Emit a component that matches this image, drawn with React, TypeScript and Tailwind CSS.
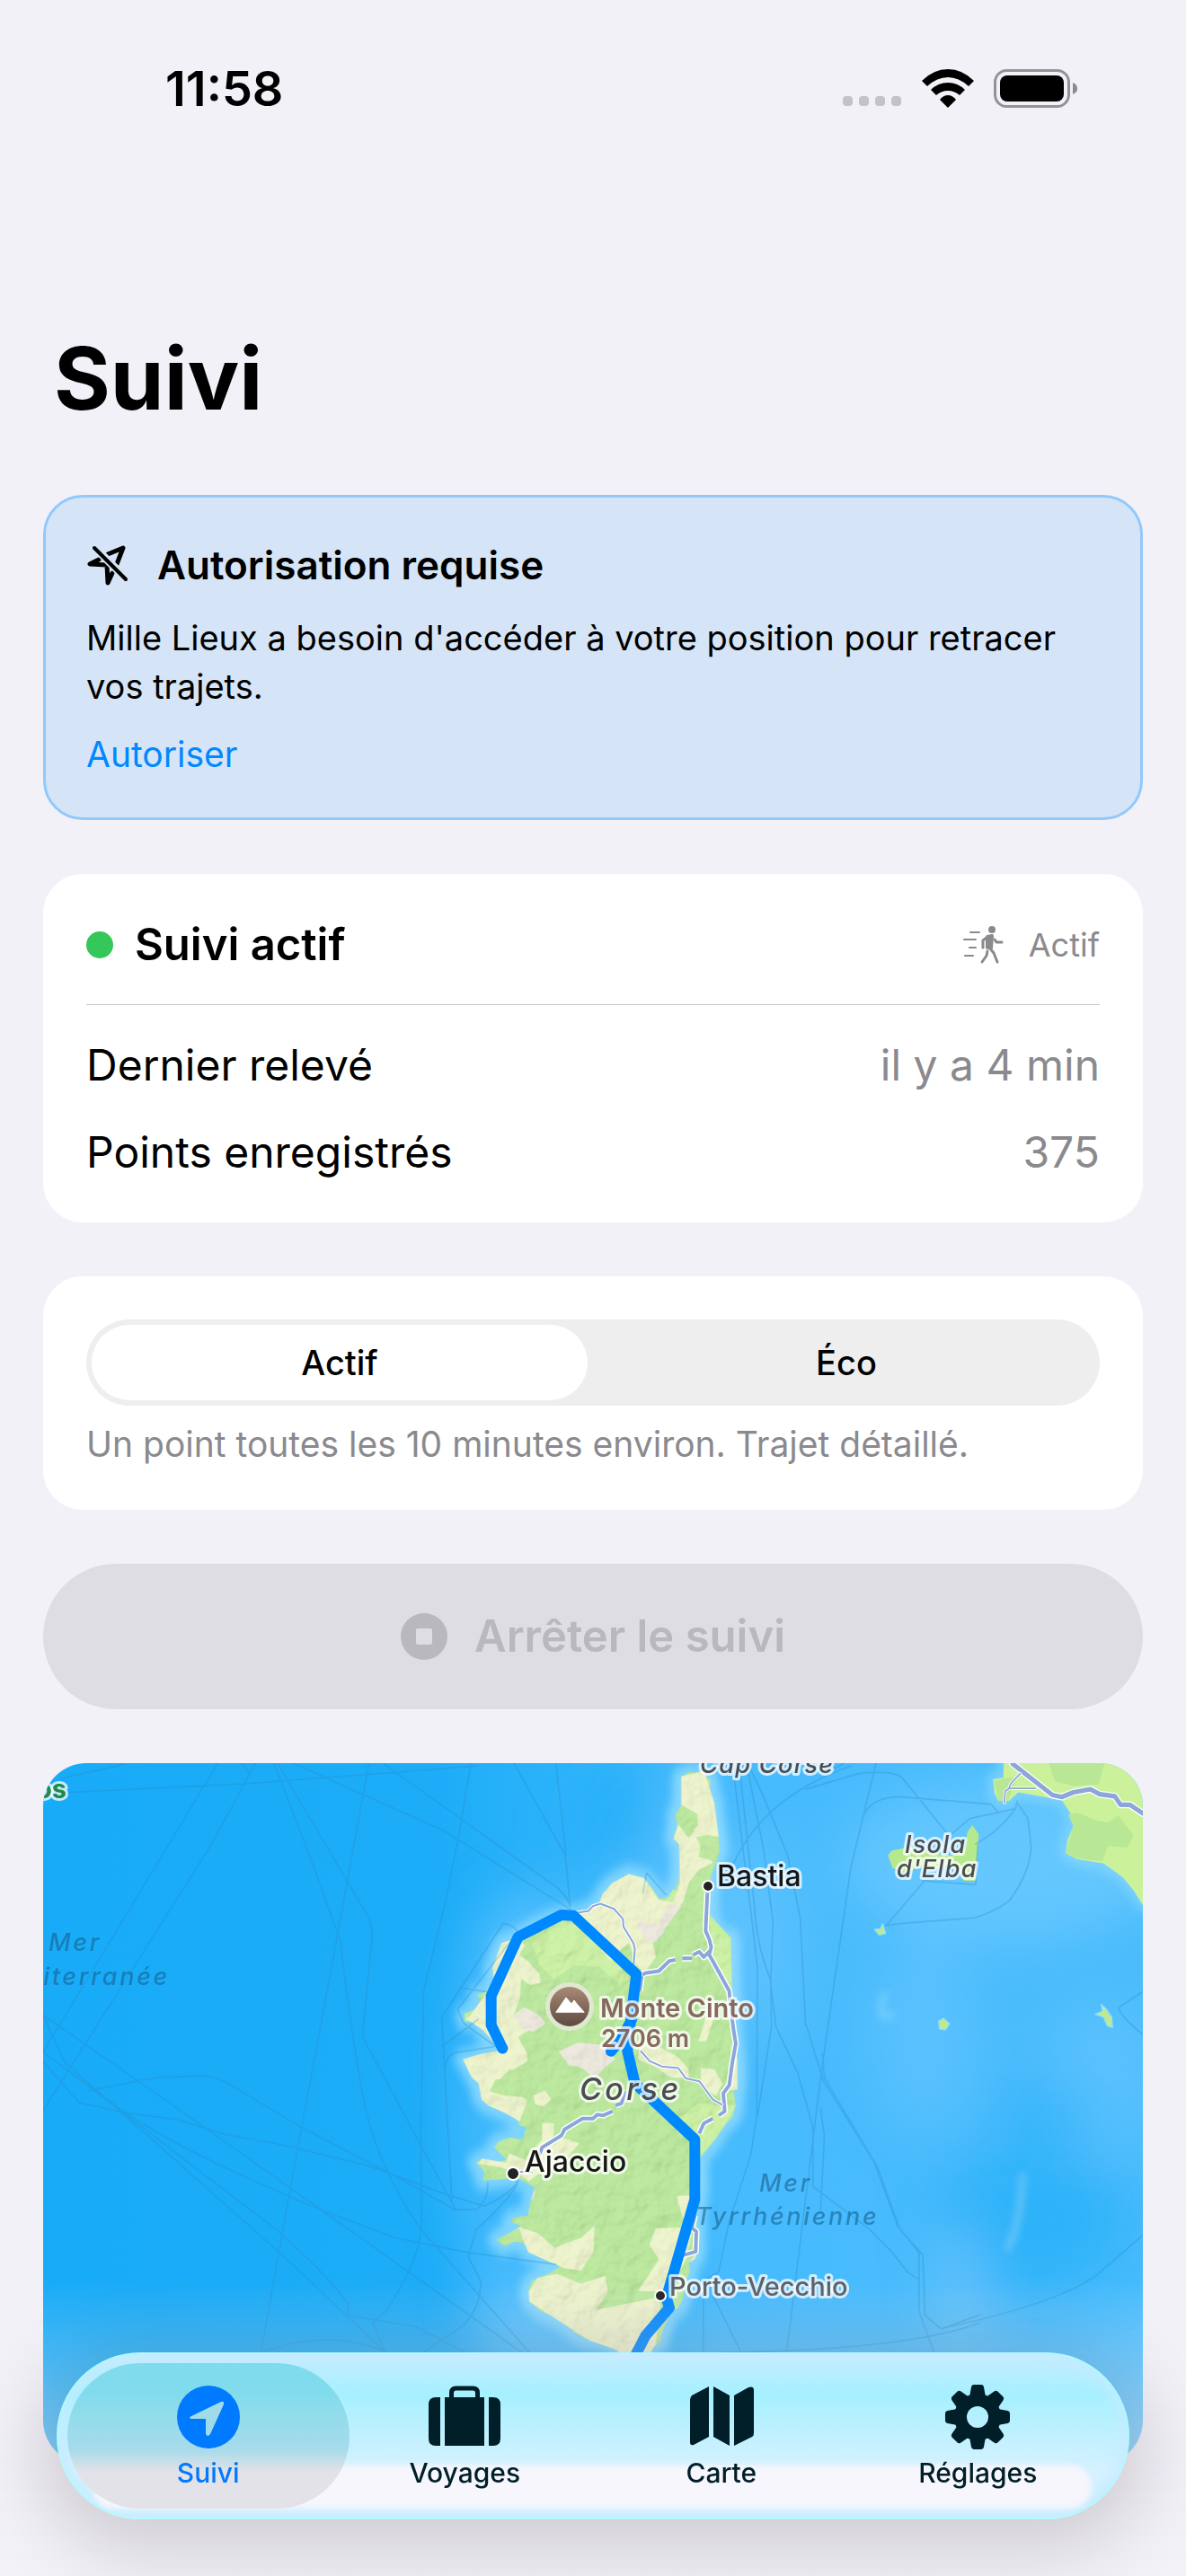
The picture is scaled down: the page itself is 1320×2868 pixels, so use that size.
import { useState } from "react";
import type { ReactNode } from "react";

const COAST =
  "M775 85L800 74L850 76L872 95L870 120L885 150L888 190L900 240L903 270L888 305L875 330L870 370L870 430L885 465L912 485L940 487L943 600L948 650L950 730L962 790L962 865L950 868L956 905L945 935L915 958L888 965L892 985L860 1015L838 1035L836 1060L838 1120L825 1180L828 1220L825 1285L800 1297L803 1320L790 1345L780 1385L765 1410L740 1420L712 1468L705 1495L670 1515L640 1560L600 1560L560 1515L520 1495L470 1492L415 1470L385 1445L340 1430L300 1415L268 1390L265 1365L275 1345L295 1335L330 1325L360 1312L380 1300L330 1285L265 1272L250 1248L215 1245L185 1257L158 1240L205 1222L238 1205L205 1195L215 1185L262 1180L272 1145L285 1110L262 1100L225 1085L165 1090L112 1092L118 1070L90 1048L110 1038L160 1048L190 1040L150 1010L165 995L205 985L245 990L258 960L235 955L222 930L190 925L130 905L108 890L98 850L80 835L75 815L45 790L100 778L185 765L150 745L115 722L125 705L95 700L72 690L52 695L52 675L90 665L105 640L92 630L120 622L150 600L145 560L160 540L178 500L225 488L300 455L375 430L420 430L460 420L500 402L512 380L545 350L600 328L650 340L680 365L700 390L740 385L765 350L772 300L768 255L748 240L762 205L755 180L775 155Z";

const MAINLAND =
  "M2655 40L2653 90L2626 95L2630 130L2640 150L2668 150L2693 128L2748 138L2808 148L2833 185L2838 215L2823 250L2818 285L2848 300L2918 310L2968 345L2998 380L3022 418L3030 40Z";

const PALE_LAND = [
  "M775 85L850 70L885 150L900 235L865 232L850 262L880 300L832 318L800 350L780 400L730 440L715 475L680 500L690 535L650 578L622 550L600 500L570 520L540 545L508 520L510 490L470 460L430 430L500 402L512 378L545 350L600 328L650 338L700 392L748 398L770 350L768 255L750 240L765 205L800 238L830 205L828 178L775 155Z",
  "M225 488L252 505L235 530L262 545L300 575L305 600L270 605L240 590L235 640L215 680L270 715L230 735L260 775L225 790L170 768L120 722L60 690L110 640L150 600L145 560L175 500Z",
  "M45 790L100 778L175 768L215 780L260 775L262 795L215 815L210 840L155 840L135 870L180 880L250 885L260 895L235 945L190 925L130 905L108 890L98 850L75 835Z",
  "M280 880L320 868L340 890L315 908L288 902Z",
  "M310 948L350 950L348 985L400 990L435 1000L400 1030L380 1060L300 1075L265 1095L240 1080L175 1060L95 1050L110 1038L190 1048L200 1025L250 1040L310 990Z",
  "M232 1208L300 1225L350 1260L440 1235L485 1205L482 1270L440 1318L380 1310L265 1272L250 1248Z",
  "M265 1370L295 1335L360 1325L440 1350L520 1330L530 1370L490 1415L590 1400L690 1385L705 1400L690 1500L640 1560L600 1560L560 1515L470 1492L340 1430L268 1395Z",
  "M690 1212L815 1208L790 1290L730 1370L630 1368L700 1290L668 1252Z",
  "M758 1130L828 1130L818 1185L780 1185Z",
  "M640 740L690 755L760 782L800 815L798 838L740 835L690 810L630 790Z",
  "M840 812L885 815L912 850L892 882L840 855Z",
  "M868 640L892 645L878 700L858 745L832 745L850 700Z",
  "M940 750L962 790L962 865L942 868Z",
];

const BRIGHT_LAND = [
  "M870 430L940 487L945 640L905 575L878 530Z",
  "M770 935L830 900L905 905L956 905L920 955L892 985L838 1035L832 985Z",
  "M175 500L160 545L190 540L200 510ZM52 675L85 690L72 697L52 695Z",
  "M780 372L745 368L722 398L760 402Z",
  "M275 500L380 445L455 460L510 520L560 545L600 590L570 605L500 560L420 555L350 590L300 555Z",
];

const ROCK = [
  "M215 680L250 660L300 680L322 700L280 722L240 710Z",
  "M365 770L430 748L520 755L555 790L520 810L485 838L440 810L400 805Z",
  "M625 445L700 455L730 405L775 408L735 450L690 498L655 490Z",
  "M800 1297L828 1270L818 1290ZM272 1145L285 1112L286 1128Z",
];

const ROADS = [
  "M862 375L856 470L868 490L875 510L868 530L880 545L935 620L940 660L950 720L957 750L945 800L935 855L915 875L920 920L900 930",
  "M880 938L850 950L835 975",
  "M870 520L850 535L835 522L815 530",
  "M810 538L778 538",
  "M755 542L735 545L700 570L655 575L643 580L636 620",
  "M545 920L515 930L495 928L480 938L445 938L385 965L375 980L310 1010L300 1030",
  "M555 905L575 900L590 870",
  "M820 1180L810 1210L825 1220L823 1270L775 1280",
];

const MINOR_ROADS = [
  "M425 425L465 420L480 408L505 402L550 415L580 440L582 460L615 500L620 515L615 560L640 580",
  "M640 770L670 795L710 808L765 812L790 838L835 845L880 890L910 903",
  "M225 1073L245 1070L275 1072",
];

const ROUTE =
  "M178 763L140 705L140 632L230 485L375 430L415 432L625 578L608 680L595 770L620 850L820 990L820 1140L725 1385L735 1410L655 1480L600 1560M540 770L575 740L610 690";

const FERRIES =
  "M575 55L114 795M675 55L560 260L114 945M640 55L662 80M975 55L880 560L780 1080L690 1566M725 55L830 320L900 510Q925 720 958 900T1113 1250L1400 1566M735 55L975 450Q988 480 982 520L958 755L1205 1200M1245 55L1215 230L1180 400L1120 640L1113 1000L1115 1240Q1110 1330 1020 1460L985 1490L1020 1566M1015 55L1470 370Q1500 395 1508 420M780 55L1170 225L1508 428M1360 55L1495 290L1508 420M1470 55L1497 290M180 128L660 105L1000 80L1260 60M165 92L330 55M114 820L210 925L330 950L470 968L590 1005L730 1030L970 1085L1180 1160L1280 1190Q1350 1160 1370 1125M114 700L500 960L850 1200L1380 1566M114 795L330 950Q500 1060 850 1200L1040 1270L1240 1310L1470 1340M235 893L415 860L550 855Q580 860 620 885L800 990L1030 1105L1205 1200L1260 1198Q1290 1180 1290 1130M114 700L170 820L740 1310L1020 1566M190 850L730 1250Q860 1360 920 1440L920 1470L1100 1500L1230 1566M690 1566Q880 1500 1020 1566M1330 465L1168 705L1195 1180M1330 465Q1350 465 1370 485L1210 685L1225 720L1310 780L1210 795Q1180 800 1178 830M1215 630L1290 640M1170 780L1265 710M1370 1130Q1350 1170 1260 1250L1238 1320L1270 1380Q1275 1450 1220 1500L1120 1566M1938 60L1968 300L1985 430L2003 580L2001 960L1985 1060L1928 1230L1900 1360L1860 1380L1860 1566M1955 60L1995 420Q2000 520 2038 610L2040 730L2003 960M1975 60L2020 280L2044 460L2038 620M1980 60L2015 130L2083 290L2116 450L2130 720L2178 870L2313 1080L2373 1240L2430 1310L2430 1460L2470 1566M2316 55L2250 320L2170 860L2080 1566M2175 800L2180 860L2320 1090L2380 1250L2440 1315L2446 1470L2488 1505L2590 1470M2038 620L2052 730L2110 850L2150 990L2150 1140L2300 1250L2360 1310L2400 1360L2428 1378M2170 940L2180 1010L2170 1200M1940 310Q2020 140 2250 60M2130 120L2270 80Q2360 70 2385 90L2510 240L2565 195L2685 170L2690 150M2288 180Q2310 140 2380 140L2620 158L2640 180M2580 260Q2640 230 2685 170M2690 155L2718 195L2727 270Q2720 340 2670 405Q2640 430 2580 450L2380 465L2343 470L2445 355M2440 355L2580 365L2585 260M1885 1420L1960 1566M2488 1505Q2840 1430 2920 1350L3022 1265M1900 1566Q2400 1560 2590 1490M3022 640L2958 680Q2960 700 3022 750M2230 55L2190 75M1700 385L1710 335L1760 390";

const MAP_LABEL = "font-medium [paint-order:stroke] stroke-white/75 stroke-[6px]";

function CorsicaMap() {
  return (
    <svg
      viewBox="0 0 1224 780"
      preserveAspectRatio="xMidYMid slice"
      className="block h-[780px] w-full"
      role="img"
      aria-label="Trajet en Corse"
      strokeLinejoin="round"
      strokeLinecap="round"
    >
      <defs>
        <linearGradient id="sea" x1="0" x2="1">
          <stop offset="0" stopColor="#18abf7" />
          <stop offset="0.36" stopColor="#1dadf8" />
          <stop offset="0.62" stopColor="#46bbfd" />
          <stop offset="1" stopColor="#4abcfc" />
        </linearGradient>
        <linearGradient id="peak" x1="0" y1="0" x2="0" y2="1">
          <stop offset="0" stopColor="#a98a76" />
          <stop offset="1" stopColor="#5f4a40" />
        </linearGradient>
        <filter id="haze" filterUnits="userSpaceOnUse" x="-200" y="-200" width="1700" height="1200">
          <feGaussianBlur stdDeviation="30" />
        </filter>
        <filter id="shore" filterUnits="userSpaceOnUse" x="-200" y="-200" width="3600" height="2200">
          <feGaussianBlur stdDeviation="14" />
        </filter>
        <filter id="streak" filterUnits="userSpaceOnUse" x="0" y="0" width="1224" height="780">
          <feGaussianBlur stdDeviation="4" />
        </filter>
        <filter id="relief" x="0" y="0" width="100%" height="100%">
          <feTurbulence type="fractalNoise" baseFrequency="0.045" numOctaves="3" seed="8" />
          <feDiffuseLighting surfaceScale="7" lightingColor="#fff">
            <feDistantLight azimuth="225" elevation="55" />
          </feDiffuseLighting>
        </filter>
        <clipPath id="island">
          <path d={COAST} transform="translate(452 -23) scale(.3333 .4464)" />
        </clipPath>
      </defs>

      <rect width="1224" height="780" fill="url(#sea)" />

      {/* shallow and deep water */}
      <g filter="url(#haze)">
        <ellipse cx="545" cy="215" rx="60" ry="70" fill="#6cc8ff" opacity=".7" />
        <ellipse cx="700" cy="170" rx="70" ry="150" fill="#6cc8ff" opacity=".5" />
        <ellipse cx="640" cy="60" rx="50" ry="60" fill="#22aff8" opacity=".8" />
        <ellipse cx="1070" cy="110" rx="180" ry="90" fill="#76ceff" opacity=".6" />
        <ellipse cx="980" cy="300" rx="60" ry="110" fill="#6cc8ff" opacity=".5" />
        <ellipse cx="1180" cy="350" rx="60" ry="90" fill="#6cc8ff" opacity=".5" />
        <ellipse cx="800" cy="200" rx="50" ry="120" fill="#6cc8ff" opacity=".5" />
        <ellipse cx="1120" cy="390" rx="60" ry="30" fill="#22aff8" opacity=".6" />
        <ellipse cx="1100" cy="510" rx="110" ry="80" fill="#22aff8" opacity=".7" />
        <ellipse cx="500" cy="400" rx="40" ry="200" fill="#5cc2ff" opacity=".6" />
        <ellipse cx="560" cy="620" rx="80" ry="60" fill="#6cc8ff" opacity=".7" />
        <ellipse cx="1020" cy="590" rx="18" ry="80" fill="#7ccbfa" opacity=".8" />
      </g>
      <g filter="url(#streak)" fill="none">
        <path d="M1090 460Q1088 510 1074 540" stroke="#8ed0f7" strokeWidth="7" opacity=".6" />
        <path d="M936 258Q925 290 945 280" stroke="#8edcff" strokeWidth="8" opacity=".5" />
      </g>

      {/* Corsica */}
      <g transform="translate(452 -23) scale(.3333 .4464)">
        <path d={COAST} fill="none" stroke="#9fe2ff" strokeWidth="20" vectorEffect="non-scaling-stroke" opacity=".7" filter="url(#shore)" />
        <path d={COAST} fill="#b3e692" />
        {BRIGHT_LAND.map((d) => <path key={d} d={d} fill="#c6f09a" />)}
        {PALE_LAND.map((d) => <path key={d} d={d} fill="#ecf3c6" />)}
        {ROCK.map((d) => <path key={d} d={d} fill="#ece6da" />)}
        <path d="M825 235L862 230L898 240L902 268L880 295L832 285L840 262ZM290 620L330 600L380 615L360 640ZM170 840L200 815L250 822L215 845Z" fill="#b9e795" />
      </g>

      {/* mainland, Elba and the small islands */}
      <g transform="translate(-48 -23) scale(.4209 .4337)">
        <path d={MAINLAND} fill="none" stroke="#9fe2ff" strokeWidth="30" opacity=".5" filter="url(#shore)" />
        <path d={MAINLAND} fill="#cbf29b" />
        <path d="M2825 185L2850 180L2898 200L2930 205L2958 188L2998 240L2980 270L2930 265L2915 305L2848 298L2818 285L2838 215ZM2768 40L2920 55L2905 108L2840 112L2790 100ZM2652 92L2690 88L2665 150L2640 150L2628 100Z" fill="#b8e795" />
        <path d="M2348 290L2358 278L2398 270L2438 275L2468 285L2518 290L2553 270L2558 230L2571 212L2588 235L2586 270L2583 300L2580 355L2548 355L2538 330L2498 315L2458 330L2428 320L2398 335L2360 322Z" fill="#b6e98c" />
        <path d="M2312 480L2328 478L2334 465L2342 490L2325 495ZM2482 715L2495 708L2511 722L2500 738L2484 735ZM2896 698L2915 690L2912 672L2925 684L2940 705L2942 732L2928 728L2918 705Z" fill="#bdea8e" stroke="#8edcff" strokeWidth="3" />
        <path d={FERRIES} fill="none" stroke="#2c8ac4" strokeWidth="4" opacity=".32" />
        <g fill="none">
          <path d="M2678 55L2783 135L2808 140L2838 128L2883 120L2908 133L2948 138L2963 160L2988 160L3022 182" stroke="#fff" strokeWidth="18" />
          <path d="M2678 55L2783 135L2808 140L2838 128L2883 120L2908 133L2948 138L2963 160L2988 160L3022 182" stroke="#8ba6d8" strokeWidth="12" />
          <path d="M2698 80L2673 105L2668 118L2738 118M2668 118L2658 125L2656 154" stroke="#fff" strokeWidth="8" />
          <path d="M2698 80L2673 105L2668 118L2738 118M2668 118L2658 125L2656 154" stroke="#8ba6d8" strokeWidth="4" />
        </g>
      </g>

      <g clipPath="url(#island)">
        <rect x="450" width="350" height="780" filter="url(#relief)" className="mix-blend-multiply" opacity=".14" />
      </g>

      <g transform="translate(452 -23) scale(.3333 .4464)" fill="none">
        <path d={ROADS.join("")} stroke="#fff" strokeWidth="7" vectorEffect="non-scaling-stroke" strokeLinecap="butt" />
        <path d={ROADS.join("")} stroke="#8ba6d8" strokeWidth="4" vectorEffect="non-scaling-stroke" strokeLinecap="butt" />
        <path d={MINOR_ROADS.join("")} stroke="#fff" strokeWidth="4" vectorEffect="non-scaling-stroke" />
        <path d={MINOR_ROADS.join("")} stroke="#8ba6d8" strokeWidth="2" vectorEffect="non-scaling-stroke" />
        <path d={ROUTE} stroke="#0088ff" strokeWidth="12" vectorEffect="non-scaling-stroke" />
      </g>

      {/* summit badge */}
      <circle cx="586" cy="271" r="27" fill="#dfe9cf" />
      <circle cx="586" cy="271" r="22" fill="url(#peak)" />
      <path d="M571 277L582 261L588 268L591 264L594 268L602 277Z" fill="#fff" stroke="#fff" strokeWidth="1" />

      <g className="fill-[#222] stroke-white stroke-2">
        <circle cx="740" cy="137" r="6" />
        <circle cx="523" cy="457" r="7" />
        <circle cx="687" cy="593" r="6" />
      </g>

      <g fontSize="29" className={MAP_LABEL}>
        <text x="750" y="137" fontSize="32" fill="#161616">Bastia</text>
        <text x="536" y="455" fontSize="32" fill="#161616">Ajaccio</text>
        <text x="697" y="593" fill="#5c6068">Porto-Vecchio</text>
        <text x="620" y="283" fontWeight="600" fill="#86695c">Monte Cinto</text>
        <text x="621" y="316" fontSize="27" fontWeight="600" fill="#86695c">2706 m</text>
        <text x="-8" y="39" fontWeight="700" fill="#1f8a4a">os</text>
        <g fontStyle="italic" fill="#4a4d50">
          <text x="597" y="375" fontSize="34" className="tracking-widest">Corse</text>
          <text x="959" y="100" fontSize="27" className="tracking-wider">Isola</text>
          <text x="950" y="127" fontSize="27" className="tracking-wider">d'Elba</text>
          <text x="731" y="11" fontSize="27" className="tracking-wider">Cap Corse</text>
        </g>
      </g>
      <g fontSize="27" fontStyle="italic" className="fill-[#17608f]/60 font-medium tracking-widest">
        <text x="6" y="209">Mer</text>
        <text x="141" y="247" textAnchor="end">Méditerranée</text>
        <text x="797" y="477">Mer</text>
        <text x="726" y="514">Tyrrhénienne</text>
      </g>
    </svg>
  );
}

function StatusBar() {
  return (
    <header className="flex h-[129px] items-end justify-between pr-[120px] pl-[184px]">
      <time className="text-[54px] leading-[60px] font-semibold">11:58</time>
      <div className="flex items-center pb-[9px]">
        <div className="flex gap-[7px] self-end pb-[2px]">
          <i className="size-[11px] rounded-[4px] bg-[#c3c2c8]" />
          <i className="size-[11px] rounded-[4px] bg-[#c3c2c8]" />
          <i className="size-[11px] rounded-[4px] bg-[#c3c2c8]" />
          <i className="size-[11px] rounded-[4px] bg-[#c3c2c8]" />
        </div>
        <svg viewBox="0 0 58 43" className="ml-[23px] h-[43px] w-[58px]">
          <path d="M0 13Q13 0 29 0T58 13L52 19Q41 9 29 9T6 19Z" />
          <path d="M10 23Q18 15 29 15T48 23L42 29Q36 24 29 24T16 29Z" />
          <path d="M20 34Q24 29 29 29T38 34L29 43Z" />
        </svg>
        <svg viewBox="0 0 94 43" className="ml-[22px] h-[43px] w-[94px]">
          <rect x="1.5" y="1.5" width="82" height="40" rx="13" fill="none" stroke="#929297" strokeWidth="3" />
          <rect x="7" y="7" width="71" height="29" rx="8" />
          <path d="M88 15Q93 17 93 21.500T88 28Z" fill="#8a8a8e" />
        </svg>
      </div>
    </header>
  );
}

function LocationSlashIcon() {
  return (
    <svg viewBox="0 0 48 48" className="size-12" fill="none" stroke="currentColor" strokeWidth="5" strokeLinecap="round" strokeLinejoin="round">
      <path d="M24 12L41 5L34 23M14 18L4 23L23 24L24 44L29 33" />
      <path d="M10 5L45 40" stroke="#d5e5f7" strokeWidth="9" />
      <path d="M9 5L44 40" strokeWidth="4" />
    </svg>
  );
}

function WalkIcon() {
  return (
    <svg viewBox="0 0 46 44" className="h-[44px] w-[46px]" fill="none" stroke="currentColor" strokeWidth="3" strokeLinecap="round" strokeLinejoin="round">
      <circle cx="33" cy="5" r="4" fill="currentColor" stroke="none" />
      <path d="M9 8H19M2 16H15M8 25H15M3 34H12" strokeWidth="2" />
      <path d="M28 13L33 12L32 25L28 25Z" fill="currentColor" strokeWidth="4" />
      <path d="M27 14L23 17V25M36 16L38 19H44M31 26L35 31L39 41M28 29L27 34L22 41" />
    </svg>
  );
}

function TabItem({ label, selected, children }: { label: string; selected?: boolean; children: ReactNode }) {
  return (
    <a
      href="#"
      aria-current={selected ? "page" : undefined}
      className={`relative flex flex-1 flex-col items-center gap-2 pt-6 ${selected ? "text-[#007aff]" : "text-[#011f28]"}`}
    >
      {selected && (
        <span className="absolute -inset-x-[14px] inset-y-0 rounded-full bg-linear-to-b from-[#80dcec] from-20% via-[#a8dbea] via-60% to-[#e3e2e8] to-75%" />
      )}
      <svg viewBox="0 0 80 72" className="relative h-[72px] w-20" fill="currentColor">
        {children}
      </svg>
      <span className="relative text-[30px] leading-9 font-medium">{label}</span>
    </a>
  );
}

function TabBar() {
  return (
    <nav className="fixed inset-x-[63px] bottom-[63px] h-[186px] overflow-clip rounded-full border-2 border-[#b0f8ff] bg-linear-to-b from-[#c4ecff] via-[#a6f0ff] via-25% to-[#d4f1ff] to-70% px-6 py-[10px] shadow-[0_16px_80px_16px_rgba(30,20,30,0.17)]">
      <span className="absolute inset-0 rounded-full shadow-[inset_0_0_16px_4px_#c6ebff]" />
      <span className="absolute inset-x-10 top-[123px] bottom-[10px] rounded-r-[40px] rounded-l-[30px] bg-[#f6f6fc] blur-[3px]" />
      <div className="flex h-full">
        <TabItem label="Suivi" selected>
          <circle cx="40" cy="36" r="35" />
          <path d="M21 35L54 19Q58 18 57 22L42 55Q39 59 37 55V38H21Q17 37 21 35Z" fill="#a0dbea" />
        </TabItem>
        <TabItem label="Voyages">
          <path d="M13 14V68H8Q0 68 0 60V22Q0 14 8 14ZM18 14H62V68H18ZM67 14H72Q80 14 80 22V60Q80 68 72 68H67Z" />
          <path d="M25.500 15V9Q25.500 4 30.500 4H49.500Q54.500 4 54.500 9V15" fill="none" stroke="currentColor" strokeWidth="5" />
        </TabItem>
        <TabItem label="Carte">
          <path d="M26 2V58L9 67Q5 68 5 64V17Q5 14 7 12ZM31 2L49 12V68L31 58ZM54 12L70 3Q76 1 76 6V54Q76 57 74 58L54 68Z" />
        </TabItem>
        <TabItem label="Réglages">
          <g stroke="currentColor" strokeWidth="6" strokeLinejoin="round">
            {[0, 45, 90, 135, 180, 225, 270, 315].map((angle) => (
              <path key={angle} d="M36 3H44L46 14H34Z" transform={`rotate(${angle} 40 36)`} />
            ))}
          </g>
          <circle cx="40" cy="36" r="19" fill="none" stroke="currentColor" strokeWidth="14" />
        </TabItem>
      </div>
    </nav>
  );
}

const MODES = [
  { id: "actif", label: "Actif" },
  { id: "eco", label: "Éco" },
];

export default function App() {
  const [mode, setMode] = useState("actif");

  return (
    <div className="min-h-screen bg-[#f2f1f7] pb-[125px] font-['Inter','Liberation_Sans',sans-serif] text-black">
      <StatusBar />

      <main className="flex flex-col gap-[60px] px-12 pt-[232px]">
        <h1 className="mb-[10px] px-3 text-[96px] leading-[120px] font-bold">Suivi</h1>

        {/* Permission notice */}
        <section className="flex flex-col gap-[22px] rounded-[44px] border-3 border-[#93c8fb] bg-[#d5e5f7] px-[45px] pt-[43px] pb-[43px]">
          <h2 className="flex items-center gap-[31px] text-[44px] leading-[64px] font-semibold">
            <LocationSlashIcon />
            Autorisation requise
          </h2>
          <p className="text-[38px] leading-[54px]">
            Mille Lieux a besoin d'accéder à votre position pour retracer vos trajets.
          </p>
          <button className="self-start text-[39px] leading-[54px] text-[#0088ff]">Autoriser</button>
        </section>

        {/* Tracking status */}
        <section className="flex flex-col gap-9 rounded-[44px] bg-white p-12">
          <div className="flex items-center">
            <span className="size-[30px] rounded-full bg-[#34c759]" />
            <h2 className="ml-6 text-[49px] leading-[61px] font-semibold">Suivi actif</h2>
            <span className="ml-auto flex items-center gap-7 text-[36px] text-[#8a8a8e]">
              <WalkIcon />
              Actif
            </span>
          </div>
          <hr className="border-t border-[#c6c6c8]" />
          <dl className="flex flex-col gap-9 text-[48px] leading-[61px]">
            <div className="flex justify-between">
              <dt>Dernier relevé</dt>
              <dd className="text-[#8a8a8e]">il y a 4 min</dd>
            </div>
            <div className="flex justify-between">
              <dt>Points enregistrés</dt>
              <dd className="text-[#8a8a8e]">375</dd>
            </div>
          </dl>
        </section>

        {/* Tracking mode */}
        <section className="flex flex-col gap-[18px] rounded-[44px] bg-white p-12">
          <div role="radiogroup" aria-label="Mode de suivi" className="flex h-24 gap-3 rounded-full bg-[#eeeeee] p-[6px]">
            {MODES.map(({ id, label }) => (
              <label
                key={id}
                className="relative flex flex-1 items-center justify-center rounded-full text-[38px] font-medium has-checked:bg-white"
              >
                <input
                  type="radio"
                  name="mode"
                  value={id}
                  checked={mode === id}
                  onChange={() => setMode(id)}
                  className="sr-only"
                />
                {label}
              </label>
            ))}
          </div>
          <p className="text-[39px] leading-[50px] text-[#8a8a8e]">
            Un point toutes les 10 minutes environ. Trajet détaillé.
          </p>
        </section>

        <button
          disabled
          className="flex h-[162px] items-center justify-center gap-[30px] rounded-full bg-[#dedde3] text-[49px] font-semibold text-[#b9b8be]"
        >
          <svg viewBox="0 0 52 52" className="size-[52px]" fill="currentColor">
            <circle cx="26" cy="26" r="26" />
            <rect x="17" y="17" width="18" height="18" rx="2" fill="#dedde3" />
          </svg>
          Arrêter le suivi
        </button>

        <section className="overflow-hidden rounded-[48px]">
          <CorsicaMap />
        </section>
      </main>

      <div className="pointer-events-none fixed inset-x-0 bottom-0 h-[330px] bg-linear-to-b from-[#f2f1f7]/0 to-[#f2f1f7]/85" />
      <TabBar />
    </div>
  );
}
